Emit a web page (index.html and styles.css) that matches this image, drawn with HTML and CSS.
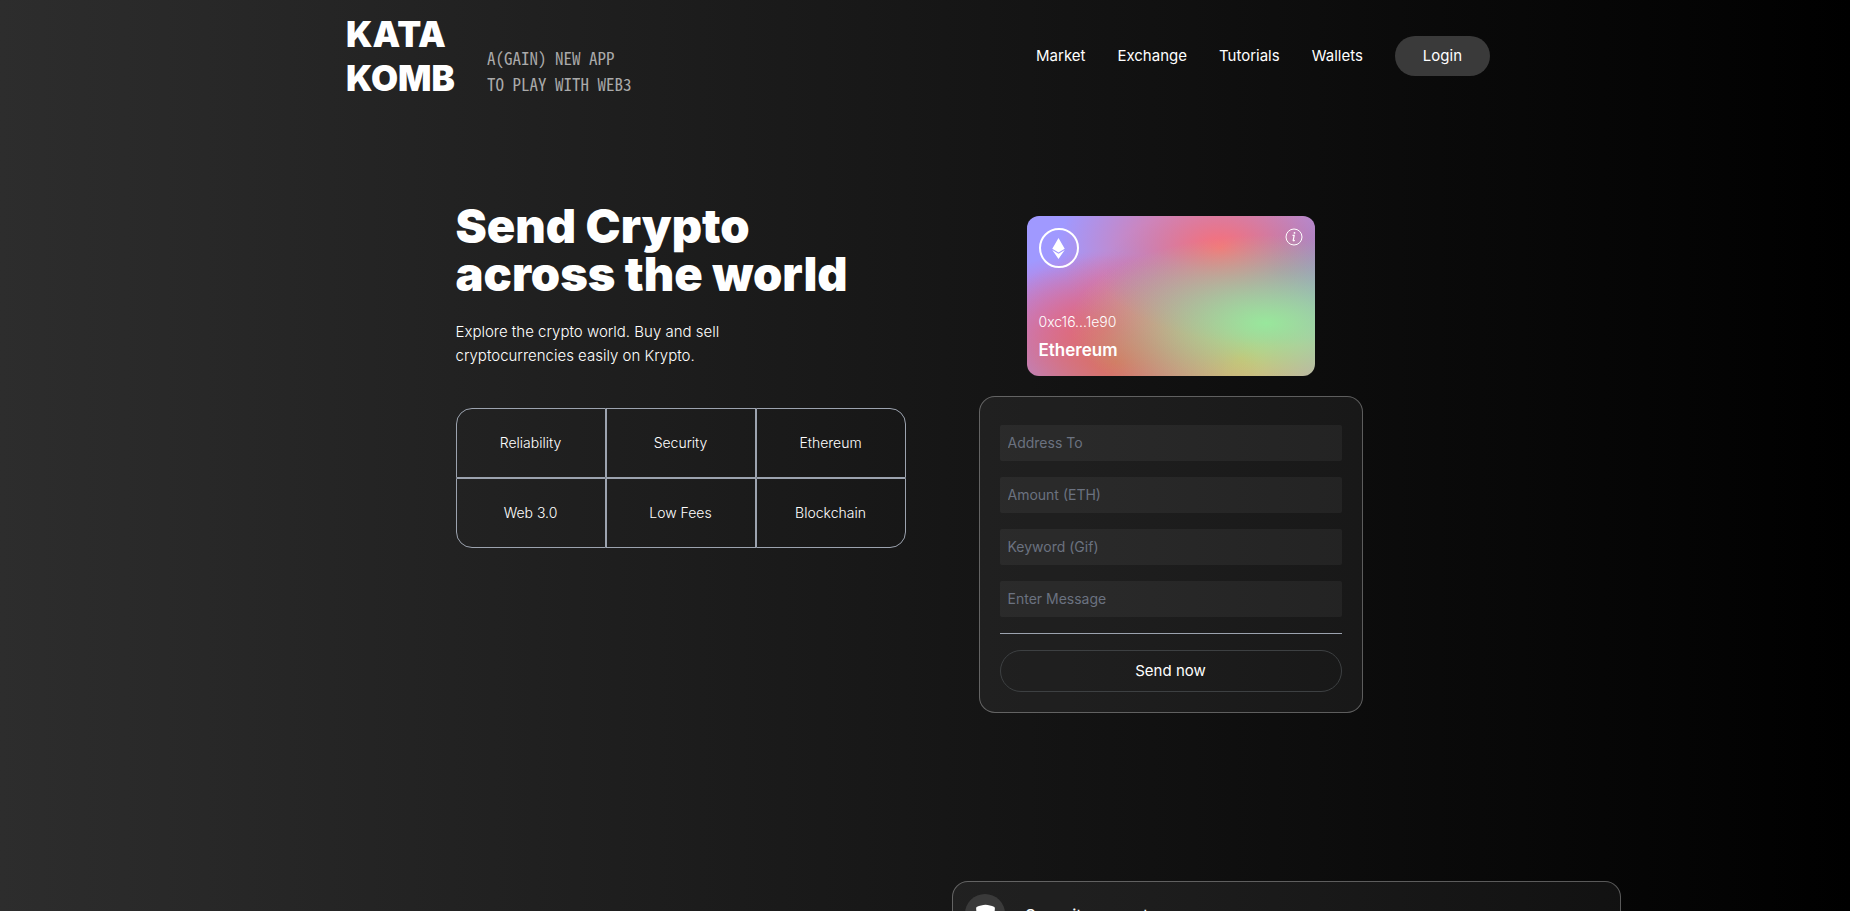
FILE: index.html
```html
<!DOCTYPE html>
<html lang="en">
<head>
<meta charset="utf-8">
<meta name="viewport" content="width=device-width, initial-scale=1">
<title>Katakomb</title>
<link rel="stylesheet" href="styles.css">
</head>
<body>
<div class="page">
  <header class="header">
    <div class="brand">
      <div class="logo">KATA<br>KOMB</div>
      <p class="tagline">A(GAIN) NEW APP<br>TO PLAY WITH WEB3</p>
    </div>
    <nav class="nav">
      <a href="#market">Market</a>
      <a href="#exchange">Exchange</a>
      <a href="#tutorials">Tutorials</a>
      <a href="#wallets">Wallets</a>
      <button class="login" type="button">Login</button>
    </nav>
  </header>

  <main>
    <section class="hero">
      <div class="intro">
        <h1>Send Crypto<br>across the world</h1>
        <p class="lead">Explore the crypto world. Buy and sell cryptocurrencies easily on Krypto.</p>
        <ul class="features">
          <li>Reliability</li>
          <li>Security</li>
          <li>Ethereum</li>
          <li>Web 3.0</li>
          <li>Low Fees</li>
          <li>Blockchain</li>
        </ul>
      </div>

      <div class="transfer">
        <div class="eth-card">
          <div class="eth-card-top">
            <span class="eth-badge">
              <svg width="21" height="21" viewBox="0 0 320 512" fill="#fff" aria-hidden="true"><path d="M311.9 260.8L160 353.6 8 260.8 160 0l151.900 260.800zM160 383.400L8 290.600 160 512l152-221.400-152 92.800z"/></svg>
            </span>
            <svg class="info" width="18" height="18" viewBox="0 0 18 18" fill="none" stroke="#fff" aria-hidden="true"><circle cx="9" cy="9" r="8"/><path d="M7.500 7.300h1.700L8.200 12.300c-.1.700.7.600 1.500-.1" stroke-width="1.200"/><circle cx="9.500" cy="4.900" r=".9" fill="#fff" stroke="none"/></svg>
          </div>
          <div>
            <p class="eth-address">0xc16...1e90</p>
            <p class="eth-name">Ethereum</p>
          </div>
        </div>

        <form class="glass form">
          <input type="text" placeholder="Address To" aria-label="Address To">
          <input type="text" placeholder="Amount (ETH)" aria-label="Amount (ETH)">
          <input type="text" placeholder="Keyword (Gif)" aria-label="Keyword (Gif)">
          <input type="text" placeholder="Enter Message" aria-label="Enter Message">
          <hr>
          <button type="button">Send now</button>
        </form>
      </div>
    </section>

    <section class="services">
      <article class="glass service">
        <span class="service-icon">
          <svg width="21" height="21" viewBox="0 0 20 20" fill="#fff" aria-hidden="true"><path d="M10 .6C7.500 .7 4 1.500 2 2.600 1.300 3 1.100 3.400 1.100 4.200 1.200 11 3.500 16.500 10 19.500 16.500 16.500 18.800 11 18.900 4.200 18.900 3.400 18.700 3 18 2.600 16 1.500 12.500 .7 10 .6z"/></svg>
        </span>
        <h3>Security gurantee</h3>
      </article>
    </section>
  </main>
</div>
</body>
</html>
```

FILE: styles.css
```css
*,
*::before,
*::after {
  box-sizing: border-box;
}

body {
  margin: 0;
  font-family: Inter, "Liberation Sans", sans-serif;
  font-size: 15px;
  line-height: 24px;
  color: #fff;
  background: #000;
}

h1, h3, p, ul {
  margin: 0;
  padding: 0;
}

button, input {
  font: inherit;
  color: inherit;
}

.page {
  height: 100vh;
  overflow: hidden;
  background: linear-gradient(to right, #2d2d2d, #000);
}

/* Header */
.header {
  display: flex;
  justify-content: space-between;
  align-items: center;
  max-width: 1158px;
  margin: 0 auto;
  padding: 12px 14px 12px 0;
}

.brand {
  display: flex;
  align-items: last baseline;
  gap: 32px;
}

.logo {
  font-size: 35px;
  line-height: 44px;
  font-weight: 900;
}

.tagline {
  font-family: "Noto Sans Mono CJK JP", "Liberation Mono", monospace;
  font-size: 17px;
  line-height: 26px;
  font-weight: 100;
  color: #aaa;
}

.nav {
  display: flex;
  align-items: center;
  gap: 32px;
}

.nav a {
  color: #fff;
  text-decoration: none;
}

.login {
  padding: 8px 28px;
  border: 0;
  border-radius: 20px;
  background: #3a3a3a;
}

/* Hero */
.hero {
  display: flex;
  justify-content: center;
  align-items: flex-start;
  gap: 73px;
  padding: 90px 32px 0 0;
}

.intro {
  width: 450px;
}

h1 {
  font-size: 47px;
  line-height: 48px;
  font-weight: 900;
  white-space: nowrap;
}

.lead {
  max-width: 300px;
  margin-top: 22px;
  font-weight: 300;
}

.features {
  display: grid;
  grid-template-columns: repeat(3, 1fr);
  margin-top: 40px;
  list-style: none;
}

.features li {
  display: flex;
  justify-content: center;
  align-items: center;
  height: 70px;
  border: 1px solid #9ca3af;
  font-size: 14px;
  line-height: 20px;
  font-weight: 300;
}

.features li:nth-child(1) { border-top-left-radius: 16px; }
.features li:nth-child(3) { border-top-right-radius: 16px; }
.features li:nth-child(4) { border-bottom-left-radius: 16px; }
.features li:nth-child(6) { border-bottom-right-radius: 16px; }

.transfer {
  display: flex;
  flex-direction: column;
  align-items: center;
  gap: 20px;
  width: 384px;
  padding-top: 14px;
}

.eth-card {
  display: flex;
  flex-direction: column;
  justify-content: space-between;
  width: 288px;
  height: 160px;
  padding: 12px;
  border-radius: 12px;
  background-color: #a099ff;
  background-image:
    radial-gradient(at 83% 67%, rgb(152, 231, 156) 0, transparent 58%),
    radial-gradient(at 67% 20%, hsl(357, 94%, 71%) 0, transparent 59%),
    radial-gradient(at 88% 35%, hsl(222, 81%, 65%) 0, transparent 50%),
    radial-gradient(at 31% 91%, hsl(9, 61%, 61%) 0, transparent 52%),
    radial-gradient(at 27% 71%, hsl(336, 91%, 65%) 0, transparent 49%),
    radial-gradient(at 74% 89%, hsl(30, 98%, 65%) 0, transparent 51%),
    radial-gradient(at 53% 75%, hsl(174, 94%, 68%) 0, transparent 45%);
}

.eth-card-top {
  display: flex;
  justify-content: space-between;
  align-items: flex-start;
}

.eth-badge {
  display: flex;
  justify-content: center;
  align-items: center;
  width: 40px;
  height: 40px;
  border: 2px solid #fff;
  border-radius: 50%;
}

.eth-address {
  font-size: 14px;
  line-height: 20px;
  font-weight: 300;
}

.eth-name {
  margin-top: 4px;
  font-size: 17px;
  line-height: 28px;
  font-weight: 600;
}

.glass {
  border: 1px solid rgba(255, 255, 255, 0.3);
  border-radius: 16px;
  background: rgba(255, 255, 255, 0.05);
}

.form {
  display: flex;
  flex-direction: column;
  gap: 16px;
  width: 100%;
  padding: 28px 20px 20px;
}

.form input {
  width: 100%;
  padding: 8px;
  border: 0;
  border-radius: 2px;
  background: rgba(255, 255, 255, 0.05);
  font-size: 14px;
  line-height: 20px;
}

.form input::placeholder {
  color: #6b7280;
  opacity: 1;
}

.form hr {
  width: 100%;
  height: 1px;
  margin: 0;
  border: 0;
  background: #9ca3af;
}

.form button {
  padding: 8px;
  border: 1px solid #3d4042;
  border-radius: 21px;
  background: transparent;
}

/* Services */
.services {
  display: flex;
  justify-content: flex-end;
  margin-top: 168px;
  padding-right: 229px;
}

.service {
  display: flex;
  align-items: flex-start;
  gap: 20px;
  width: 669px;
  padding: 12px;
}

.service-icon {
  display: flex;
  justify-content: center;
  align-items: center;
  width: 40px;
  height: 40px;
  border-radius: 50%;
  background: #3a3a3a;
}

.service h3 {
  margin-top: 8px;
  font-size: 17px;
  line-height: 28px;
  font-weight: 400;
}
```
